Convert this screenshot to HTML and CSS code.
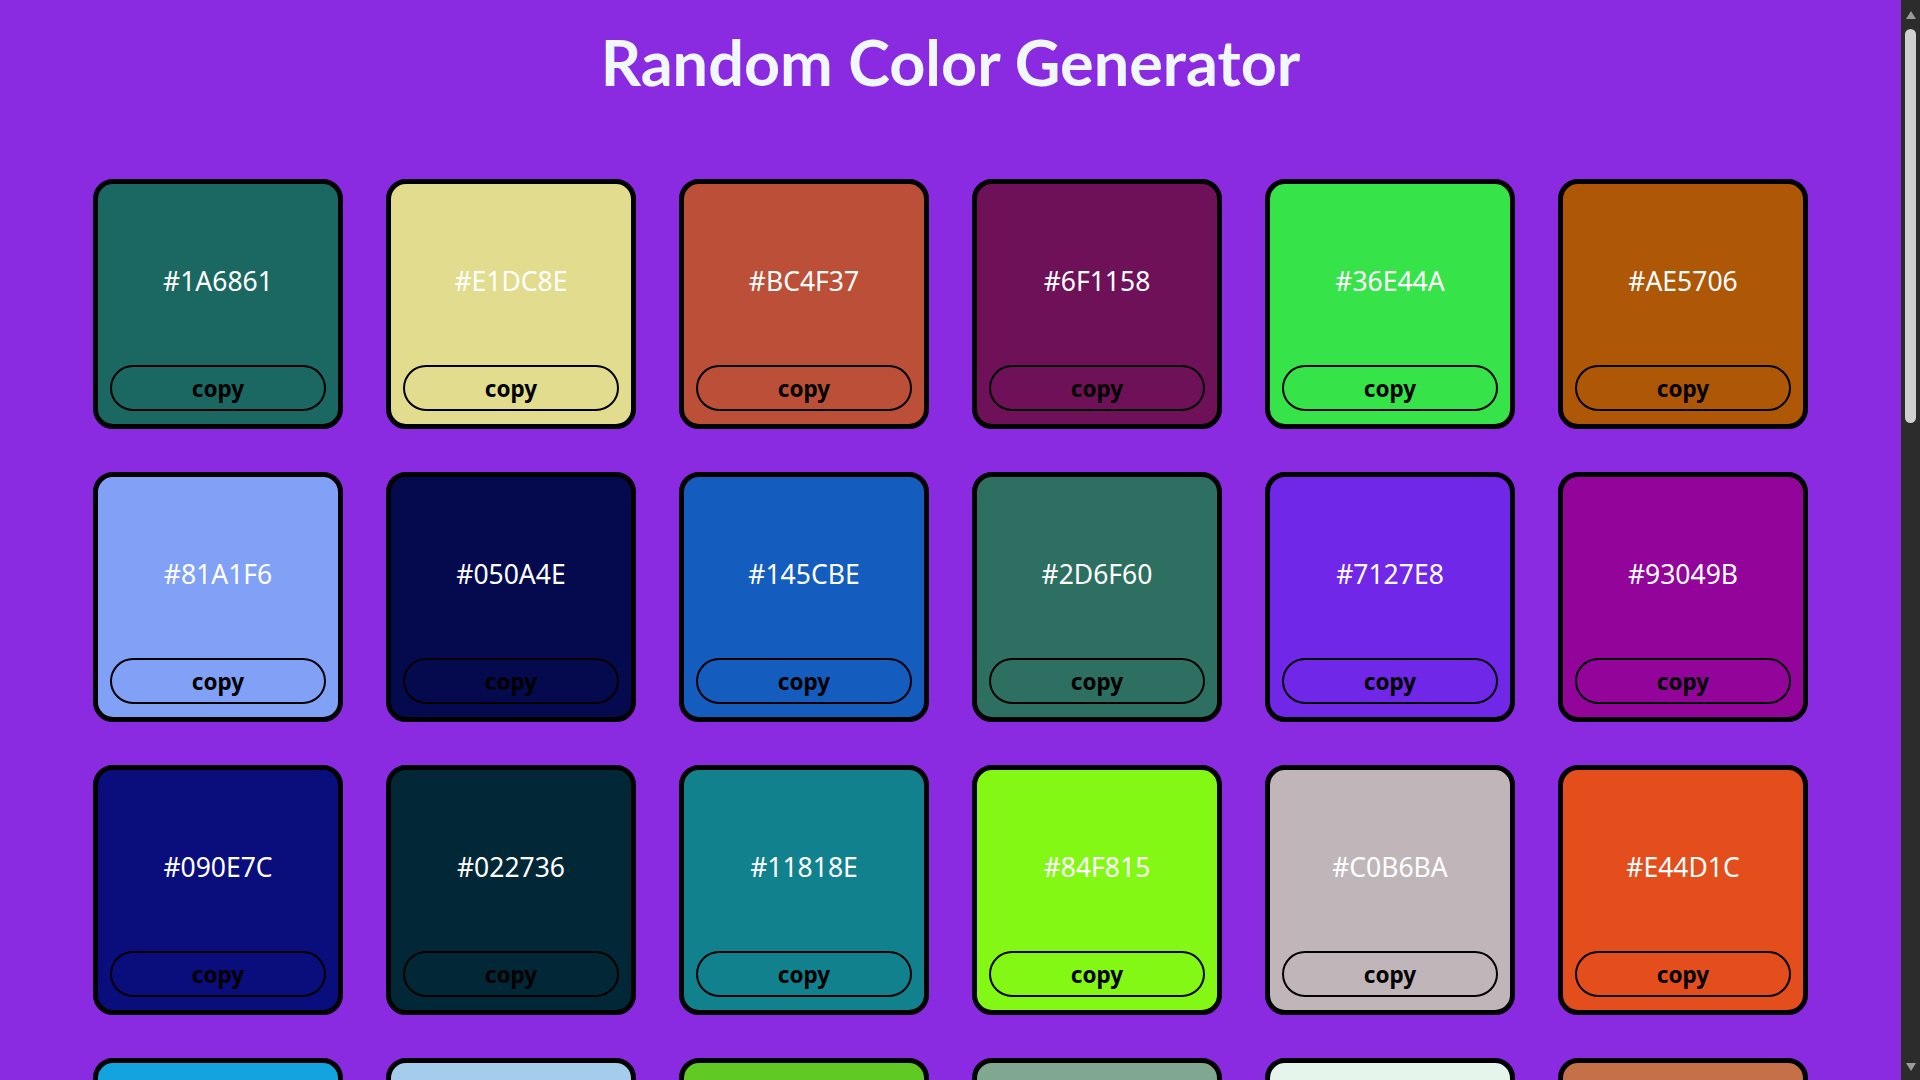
FILE: index.html
```html
<!DOCTYPE html>
<html lang="en">
<head>
<meta charset="utf-8">
<title>Random Color Generator</title>
<link rel="stylesheet" href="styles.css">
</head>
<body>
<h1 class="title">Random Color Generator</h1>
<main class="grid">
<div class="card" style="background:#1A6861"><div class="hex">#1A6861</div><button class="copy">copy</button></div>
<div class="card" style="background:#E1DC8E"><div class="hex">#E1DC8E</div><button class="copy">copy</button></div>
<div class="card" style="background:#BC4F37"><div class="hex">#BC4F37</div><button class="copy">copy</button></div>
<div class="card" style="background:#6F1158"><div class="hex">#6F1158</div><button class="copy">copy</button></div>
<div class="card" style="background:#36E44A"><div class="hex">#36E44A</div><button class="copy">copy</button></div>
<div class="card" style="background:#AE5706"><div class="hex">#AE5706</div><button class="copy">copy</button></div>
<div class="card" style="background:#81A1F6"><div class="hex">#81A1F6</div><button class="copy">copy</button></div>
<div class="card" style="background:#050A4E"><div class="hex">#050A4E</div><button class="copy">copy</button></div>
<div class="card" style="background:#145CBE"><div class="hex">#145CBE</div><button class="copy">copy</button></div>
<div class="card" style="background:#2D6F60"><div class="hex">#2D6F60</div><button class="copy">copy</button></div>
<div class="card" style="background:#7127E8"><div class="hex">#7127E8</div><button class="copy">copy</button></div>
<div class="card" style="background:#93049B"><div class="hex">#93049B</div><button class="copy">copy</button></div>
<div class="card" style="background:#090E7C"><div class="hex">#090E7C</div><button class="copy">copy</button></div>
<div class="card" style="background:#022736"><div class="hex">#022736</div><button class="copy">copy</button></div>
<div class="card" style="background:#11818E"><div class="hex">#11818E</div><button class="copy">copy</button></div>
<div class="card" style="background:#84F815"><div class="hex">#84F815</div><button class="copy">copy</button></div>
<div class="card" style="background:#C0B6BA"><div class="hex">#C0B6BA</div><button class="copy">copy</button></div>
<div class="card" style="background:#E44D1C"><div class="hex">#E44D1C</div><button class="copy">copy</button></div>
<div class="card" style="background:#13A3DF"><div class="hex">#13A3DF</div><button class="copy">copy</button></div>
<div class="card" style="background:#A4CCEB"><div class="hex">#A4CCEB</div><button class="copy">copy</button></div>
<div class="card" style="background:#61C923"><div class="hex">#61C923</div><button class="copy">copy</button></div>
<div class="card" style="background:#80A890"><div class="hex">#80A890</div><button class="copy">copy</button></div>
<div class="card" style="background:#E6F5EC"><div class="hex">#E6F5EC</div><button class="copy">copy</button></div>
<div class="card" style="background:#C57048"><div class="hex">#C57048</div><button class="copy">copy</button></div>
<div class="card" style="background:#3A7BD5"><div class="hex">#3A7BD5</div><button class="copy">copy</button></div>
<div class="card" style="background:#D2691E"><div class="hex">#D2691E</div><button class="copy">copy</button></div>
<div class="card" style="background:#5B2C6F"><div class="hex">#5B2C6F</div><button class="copy">copy</button></div>
<div class="card" style="background:#1E8449"><div class="hex">#1E8449</div><button class="copy">copy</button></div>
<div class="card" style="background:#F4D03F"><div class="hex">#F4D03F</div><button class="copy">copy</button></div>
<div class="card" style="background:#922B21"><div class="hex">#922B21</div><button class="copy">copy</button></div>
<div class="card" style="background:#17A589"><div class="hex">#17A589</div><button class="copy">copy</button></div>
<div class="card" style="background:#6C3483"><div class="hex">#6C3483</div><button class="copy">copy</button></div>
<div class="card" style="background:#CA6F1E"><div class="hex">#CA6F1E</div><button class="copy">copy</button></div>
<div class="card" style="background:#2E4053"><div class="hex">#2E4053</div><button class="copy">copy</button></div>
<div class="card" style="background:#AED6F1"><div class="hex">#AED6F1</div><button class="copy">copy</button></div>
<div class="card" style="background:#7D3C98"><div class="hex">#7D3C98</div><button class="copy">copy</button></div>
<div class="card" style="background:#48C9B0"><div class="hex">#48C9B0</div><button class="copy">copy</button></div>
<div class="card" style="background:#B03A2E"><div class="hex">#B03A2E</div><button class="copy">copy</button></div>
<div class="card" style="background:#5DADE2"><div class="hex">#5DADE2</div><button class="copy">copy</button></div>
<div class="card" style="background:#F5B041"><div class="hex">#F5B041</div><button class="copy">copy</button></div>
<div class="card" style="background:#1B4F72"><div class="hex">#1B4F72</div><button class="copy">copy</button></div>
<div class="card" style="background:#A9DFBF"><div class="hex">#A9DFBF</div><button class="copy">copy</button></div>
<div class="card" style="background:#EC7063"><div class="hex">#EC7063</div><button class="copy">copy</button></div>
<div class="card" style="background:#0B5345"><div class="hex">#0B5345</div><button class="copy">copy</button></div>
<div class="card" style="background:#D7BDE2"><div class="hex">#D7BDE2</div><button class="copy">copy</button></div>
<div class="card" style="background:#873600"><div class="hex">#873600</div><button class="copy">copy</button></div>
<div class="card" style="background:#2874A6"><div class="hex">#2874A6</div><button class="copy">copy</button></div>
<div class="card" style="background:#58D68D"><div class="hex">#58D68D</div><button class="copy">copy</button></div>
<div class="card" style="background:#641E16"><div class="hex">#641E16</div><button class="copy">copy</button></div>
<div class="card" style="background:#F7DC6F"><div class="hex">#F7DC6F</div><button class="copy">copy</button></div>
<div class="card" style="background:#4A235A"><div class="hex">#4A235A</div><button class="copy">copy</button></div>
<div class="card" style="background:#85C1E9"><div class="hex">#85C1E9</div><button class="copy">copy</button></div>
<div class="card" style="background:#BA4A00"><div class="hex">#BA4A00</div><button class="copy">copy</button></div>
<div class="card" style="background:#138D75"><div class="hex">#138D75</div><button class="copy">copy</button></div>
</main>
<div class="scrollbar" aria-hidden="true">
  <span class="arrow arrow-up"></span>
  <span class="thumb"></span>
  <span class="spacer"></span>
  <span class="arrow arrow-down"></span>
</div>
</body>
</html>
```

FILE: styles.css
```css
html {
  background: #8a2be2;
}

body {
  margin: 0;
  padding: 0 19px 28px 0;
  background: #8a2be2;
  font-family: "Noto Sans", "Open Sans", sans-serif;
}

.title {
  margin: 22px 0 0;
  height: 80px;
  line-height: 80px;
  font-family: Lato, "Noto Sans", sans-serif;
  font-size: 63px;
  font-weight: 700;
  color: #f0f8ff;
  text-align: center;
}

.grid {
  display: grid;
  grid-template-columns: repeat(6, 250px);
  gap: 43px;
  justify-content: center;
  margin-top: 77px;
}

.card {
  box-sizing: border-box;
  width: 250px;
  height: 250px;
  border: 5px solid #000;
  border-radius: 20px;
  display: flex;
  flex-direction: column;
  align-items: center;
}

.hex {
  flex: 1;
  display: flex;
  align-items: center;
  justify-content: center;
  padding-top: 12px;
  font-size: 26.5px;
  font-weight: 400;
  color: #fff;
}

.copy {
  width: 90%;
  height: 46px;
  margin-bottom: 13px;
  border: 2px solid #000;
  border-radius: 23px;
  background: transparent;
  font-family: "Noto Sans", "Open Sans", sans-serif;
  font-size: 22.5px;
  font-weight: 700;
  color: #000;
}

/* classic scrollbar as it appears in the capture */
.scrollbar {
  position: fixed;
  top: 0;
  right: 0;
  width: 19px;
  height: 100vh;
  box-sizing: border-box;
  padding: 11px 4px 9px;
  background: #2c2c2c;
  display: flex;
  flex-direction: column;
  align-items: center;
}

.arrow {
  width: 0;
  height: 0;
  border-left: 5.5px solid transparent;
  border-right: 5.5px solid transparent;
}

.arrow-up {
  border-bottom: 8px solid #9a9a9a;
}

.arrow-down {
  border-top: 8px solid #9a9a9a;
}

.thumb {
  margin-top: 10px;
  width: 11px;
  height: 394px;
  border-radius: 6px;
  background: #d0d0d0;
}

.spacer {
  flex: 1;
}
```
